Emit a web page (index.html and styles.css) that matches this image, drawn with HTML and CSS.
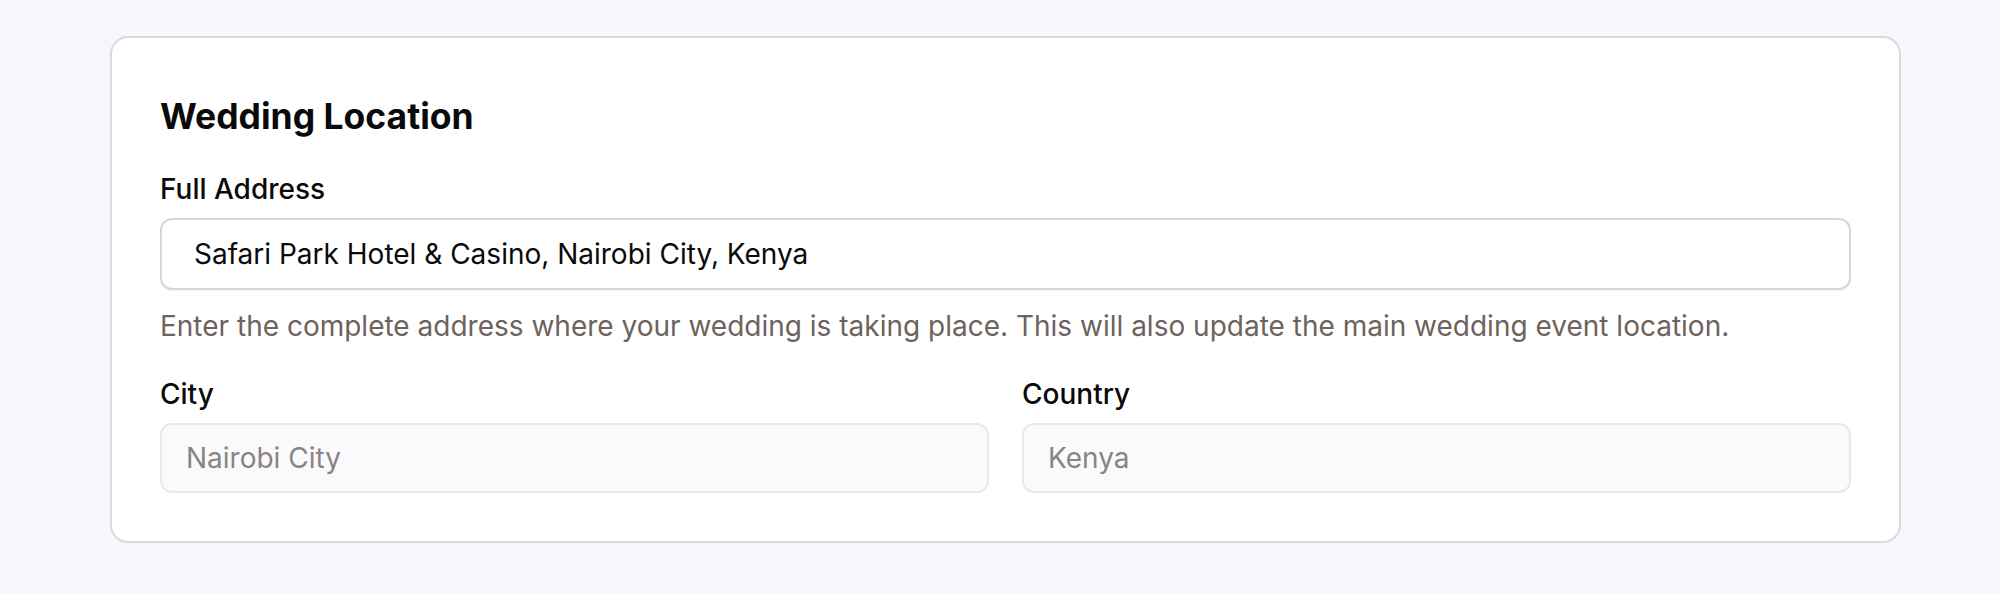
FILE: index.html
```html
<!DOCTYPE html>
<html lang="en">
<head>
<meta charset="utf-8">
<title>Wedding Location</title>
<link rel="stylesheet" href="styles.css">
</head>
<body>
<div class="page">
  <section class="card">
    <h2 class="title">Wedding Location</h2>
    <div class="field">
      <label class="label" for="addr">Full Address</label>
      <input class="input input-main" id="addr" type="text" value="Safari Park Hotel &amp; Casino, Nairobi City, Kenya">
      <p class="help">Enter the complete address where your wedding is taking place. This will also update the main wedding event location.</p>
    </div>
    <div class="grid">
      <div class="field">
        <label class="label" for="city">City</label>
        <input class="input input-muted" id="city" type="text" value="Nairobi City" disabled>
      </div>
      <div class="field">
        <label class="label" for="country">Country</label>
        <input class="input input-muted" id="country" type="text" value="Kenya" disabled>
      </div>
    </div>
  </section>
</div>
</body>
</html>
```

FILE: styles.css
```css
html, body {
  margin: 0;
  padding: 0;
  background: #f7f7fb;
}

body {
  font-family: Inter, "Noto Sans", "Liberation Sans", sans-serif;
  color: #0a0a0a;
}

.page {
  padding: 36px 0 0 110px;
}

.card {
  box-sizing: border-box;
  width: 1791px;
  background: #ffffff;
  border: 2px solid #d9d9e1;
  border-radius: 18px;
  padding: 48px 48px 48px;
}

.title {
  margin: 3px 0 26px 0;
  font-size: 35.5px;
  line-height: 56px;
  font-weight: 700;
  color: #0a0a0a;
}

.field {
  display: flex;
  flex-direction: column;
}

.label {
  font-size: 28px;
  line-height: 36px;
  font-weight: 500;
  color: #0a0a0a;
  margin-bottom: 11px;
}

.input {
  box-sizing: border-box;
  width: 100%;
  height: 72px;
  margin: 0;
  border-radius: 12px;
  font-family: Inter, "Noto Sans", "Liberation Sans", sans-serif;
  font-size: 28px;
  outline: none;
}

.input-main {
  border: 2px solid #d6d6de;
  background: #ffffff;
  color: #0a0a0a;
  padding: 0 32px;
  box-shadow: 0 1px 2px rgba(0, 0, 0, 0.05);
}

.input-muted {
  height: 70px;
  border: 2px solid #e8e8ee;
  background: #fafafc;
  color: #8a8484;
  -webkit-text-fill-color: #8a8484;
  padding: 0 24px;
  opacity: 1;
}

.help {
  margin: 18px 0 0 0;
  font-size: 28px;
  line-height: 36px;
  color: #6c635e;
}

.grid {
  display: grid;
  grid-template-columns: 1fr 1fr;
  column-gap: 33px;
  margin-top: 32px;
}
```
